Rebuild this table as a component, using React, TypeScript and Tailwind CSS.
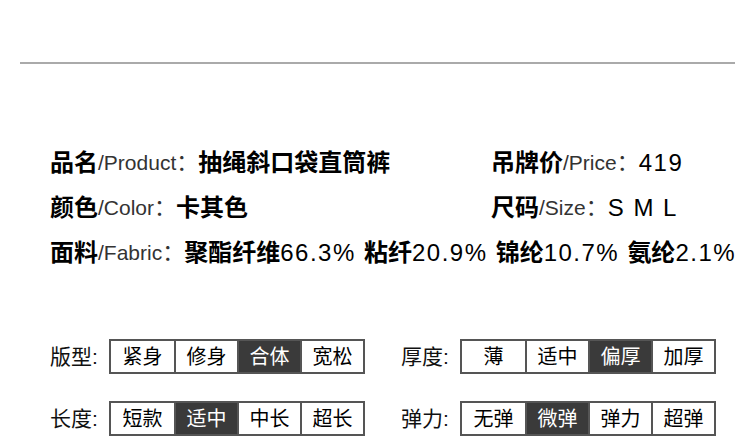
import React from "react";

const FONT = { fontFamily: '"Liberation Sans", "Noto Sans CJK SC", sans-serif' };

function Value({ text }: { text: string }) {
  const parts = text.match(/[\u4e00-\u9fff]+|[^\u4e00-\u9fff]+/g) || [];
  return (
    <span className="text-[24px] text-black">
      {parts.map((p, i) =>
        /[\u4e00-\u9fff]/.test(p) ? (
          <span key={i} className="font-bold">{p}</span>
        ) : (
          <span key={i} className="tracking-[1.5px] whitespace-pre">{p}</span>
        )
      )}
    </span>
  );
}

function Info({ label, en, value }: { label: string; en: string; value: string }) {
  return (
    <div className="flex items-center h-[45px] whitespace-nowrap">
      <span className="text-[24px] font-bold text-black">{label}</span>
      <span className="text-[21px] text-[#333]">/{en}</span>
      <span className="text-[22px] text-[#333]">：</span>
      <Value text={value} />
    </div>
  );
}

function Selector({ label, items, active }: { label: string; items: string[]; active: number }) {
  return (
    <div className="flex items-center h-[35px]">
      <span className="w-[59px] text-[21px] text-[#111]">{label}</span>
      <div className="flex h-[35px] border-2 border-[#555]">
        {items.map((it, i) => (
          <div
            key={it}
            className={
              "w-[63px] h-full flex items-center justify-center text-[20px] " +
              (i > 0 ? "border-l-2 border-[#555] " : "") +
              (i === active ? "bg-[#3a3a3a] text-white" : "bg-white text-black")
            }
          >
            {it}
          </div>
        ))}
      </div>
    </div>
  );
}

export default function App() {
  return (
    <div className="w-[750px] h-[445px] bg-white overflow-hidden" style={FONT}>
      <div className="pt-[62px] pl-[20px]">
        <div className="w-[715px] h-[2px] bg-[#aaa]" />
      </div>
      <div className="mt-[76px] pl-[50px]">
        <div className="grid grid-cols-[441px_1fr]">
          <Info label="品名" en="Product" value="抽绳斜口袋直筒裤" />
          <Info label="吊牌价" en="Price" value="419" />
          <Info label="颜色" en="Color" value="卡其色" />
          <Info label="尺码" en="Size" value="S M L" />
        </div>
        <Info label="面料" en="Fabric" value="聚酯纤维66.3% 粘纤20.9% 锦纶10.7% 氨纶2.1%" />
      </div>
      <div className="mt-[64px] pl-[50px] grid grid-cols-[351px_1fr] gap-y-[27px]">
        <Selector label="版型:" items={["紧身", "修身", "合体", "宽松"]} active={2} />
        <Selector label="厚度:" items={["薄", "适中", "偏厚", "加厚"]} active={2} />
        <Selector label="长度:" items={["短款", "适中", "中长", "超长"]} active={1} />
        <Selector label="弹力:" items={["无弹", "微弹", "弹力", "超弹"]} active={1} />
      </div>
    </div>
  );
}
